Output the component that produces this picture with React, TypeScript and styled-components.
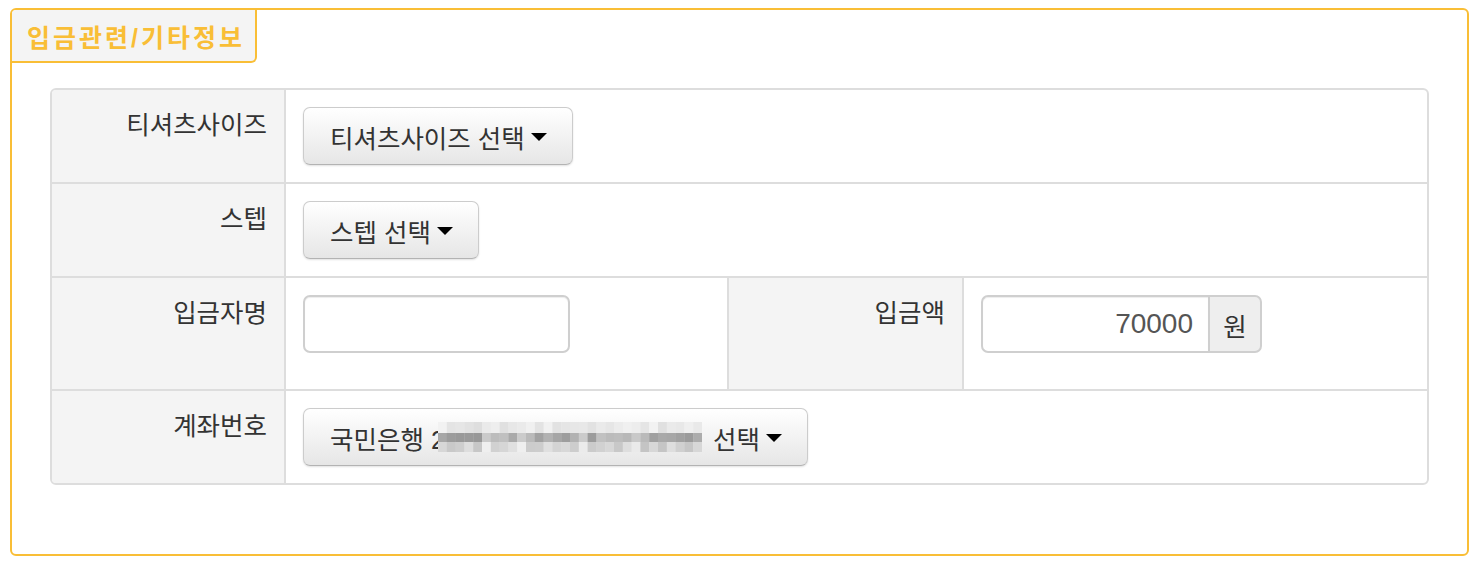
import React from 'react';
import styled, { createGlobalStyle } from 'styled-components';

const ORANGE = '#f9be36';
const LINE = '#dddddd';
const FONT = `"Liberation Sans", "Noto Sans CJK KR", sans-serif`;

const GlobalStyle = createGlobalStyle`
  html, body { margin: 0; padding: 0; background: #fff; }
  body { font-family: ${FONT}; color: #333; }
  *, *::before, *::after { box-sizing: border-box; }
`;

const Page = styled.div`
  padding: 8px 13px 14px 10px;
`;

const Panel = styled.section`
  height: 548px;
  border: 2px solid ${ORANGE};
  border-radius: 6px;
  display: flex;
  flex-direction: column;
`;

const Tab = styled.h3`
  margin: 0;
  width: 245px;
  height: 53px;
  padding-left: 15px;
  display: flex;
  align-items: center;
  background: #f4f4f4;
  border-right: 2px solid ${ORANGE};
  border-bottom: 2px solid ${ORANGE};
  border-radius: 4px 0 6px 0;
  color: ${ORANGE};
  font-size: 25px;
  font-weight: bold;
  letter-spacing: 3px;
  white-space: nowrap;
`;

const Table = styled.div`
  margin: 25px 38px 0 38px;
  border: 2px solid ${LINE};
  border-radius: 6px;
  overflow: hidden;
`;

const Row = styled.div<{ $split?: boolean }>`
  display: grid;
  grid-template-columns: ${(p) => (p.$split ? '234px 443px 235px 1fr' : '234px 1fr')};
  & + & {
    border-top: 2px solid ${LINE};
  }
`;

const LabelCell = styled.div`
  background: #f4f4f4;
  border-right: 2px solid ${LINE};
  padding: 21px 17px 0 10px;
  text-align: right;
  font-size: 25.5px;
  line-height: 28px;
  color: #333;
`;

const ValueCell = styled.div<{ $divider?: boolean }>`
  padding: 17px 17px;
  display: flex;
  align-items: flex-start;
  ${(p) => (p.$divider ? `border-right: 2px solid ${LINE};` : '')}
`;

const DropButton = styled.button`
  height: 58px;
  padding: 0 25px 0 26px;
  display: inline-flex;
  align-items: center;
  gap: 6px;
  font-family: ${FONT};
  font-size: 25.5px;
  color: #333;
  background: linear-gradient(to bottom, #ffffff, #e6e6e6);
  border: 1px solid #cccccc;
  border-bottom-color: #b3b3b3;
  border-radius: 7px;
  box-shadow: inset 0 1px 0 rgba(255, 255, 255, 0.2), 0 1px 2px rgba(0, 0, 0, 0.12);
  white-space: nowrap;
  cursor: pointer;
`;

const Caret = styled.span`
  display: inline-block;
  width: 0;
  height: 0;
  border-left: 8px solid transparent;
  border-right: 8px solid transparent;
  border-top: 8px solid #000;
  margin-top: 2px;
`;

const TextInput = styled.input`
  width: 267px;
  height: 58px;
  margin-bottom: 19px;
  padding: 0 12px;
  border: 2px solid #cfcfcf;
  border-radius: 7px;
  font-family: ${FONT};
  font-size: 28px;
  color: #555;
  box-shadow: inset 0 1px 1px rgba(0, 0, 0, 0.075);
  outline: none;
`;

const InputGroup = styled.div`
  display: flex;
  height: 58px;
`;

const AmountInput = styled.input`
  width: 227px;
  height: 58px;
  padding: 0 15px 0 13px;
  border: 2px solid #cfcfcf;
  border-right: none;
  border-radius: 7px 0 0 7px;
  font-family: ${FONT};
  font-size: 28px;
  color: #555;
  text-align: right;
  box-shadow: inset 0 1px 1px rgba(0, 0, 0, 0.075);
  outline: none;
`;

const Addon = styled.span`
  width: 54px;
  height: 58px;
  display: flex;
  align-items: center;
  justify-content: center;
  background: #eeeeee;
  border: 2px solid #cfcfcf;
  border-radius: 0 7px 7px 0;
  font-size: 25.5px;
  color: #333;
`;

const Redacted = styled.svg`
  display: block;
  margin-left: -13px;
  margin-right: 5px;
`;

const GAPS = new Set([5, 9, 16, 22]);
function shade(row: number, col: number): number {
  const seed = Math.sin((row + 1) * 91.7 + col * 12.9898) * 43758.5453;
  const r = seed - Math.floor(seed);
  if (GAPS.has(col)) return row === 1 ? 200 + Math.round(r * 18) : 232 + Math.round(r * 10);
  if (row === 0) return 222 + Math.round(r * 20);
  if (row === 1) return 152 + Math.round(r * 42);
  return 196 + Math.round(r * 28);
}

const COLS = 30;
const CELL = 8.8;
const ROWS = [11, 9, 10];

function Mosaic() {
  const rects: React.ReactNode[] = [];
  let y = 0;
  ROWS.forEach((h, r) => {
    for (let c = 0; c < COLS; c++) {
      const v = shade(r, c);
      rects.push(
        <rect key={`${r}-${c}`} x={c * CELL} y={y} width={CELL + 0.3} height={h} fill={`rgb(${v},${v},${v})`} />
      );
    }
    y += h;
  });
  return (
    <Redacted width={COLS * CELL} height={30} viewBox={`0 0 ${COLS * CELL} 30`} aria-hidden>
      {rects}
    </Redacted>
  );
}

export default function App() {
  return (
    <>
      <GlobalStyle />
      <Page>
        <Panel>
          <Tab>입금관련/기타정보</Tab>
          <Table>
            <Row>
              <LabelCell>티셔츠사이즈</LabelCell>
              <ValueCell>
                <DropButton>
                  티셔츠사이즈 선택 <Caret />
                </DropButton>
              </ValueCell>
            </Row>
            <Row>
              <LabelCell>스텝</LabelCell>
              <ValueCell>
                <DropButton>
                  스텝 선택 <Caret />
                </DropButton>
              </ValueCell>
            </Row>
            <Row $split>
              <LabelCell>입금자명</LabelCell>
              <ValueCell $divider>
                <TextInput type="text" />
              </ValueCell>
              <LabelCell>입금액</LabelCell>
              <ValueCell>
                <InputGroup>
                  <AmountInput type="text" defaultValue="70000" />
                  <Addon>원</Addon>
                </InputGroup>
              </ValueCell>
            </Row>
            <Row>
              <LabelCell>계좌번호</LabelCell>
              <ValueCell>
                <DropButton>
                  국민은행 2<Mosaic />
                  선택 <Caret />
                </DropButton>
              </ValueCell>
            </Row>
          </Table>
        </Panel>
      </Page>
    </>
  );
}
